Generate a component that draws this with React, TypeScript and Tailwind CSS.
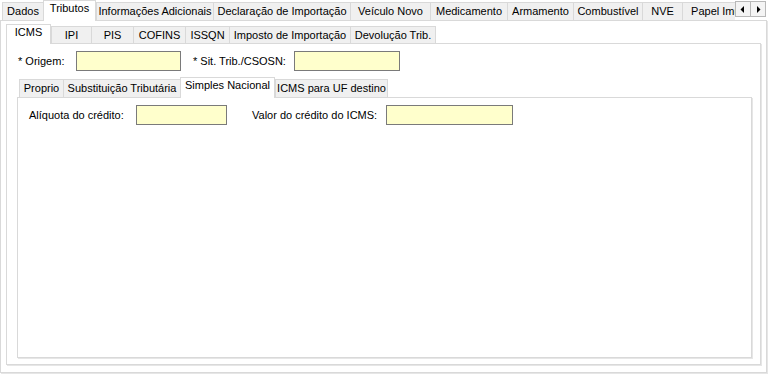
import React from "react";

type TabDef = { label: string; w: number; selected?: boolean };

function Tab({ label, w, selected, hSel, hUn }: TabDef & { hSel: string; hUn: string }) {
  if (selected) {
    return (
      <div
        style={{ width: w }}
        className={`${hSel} shrink-0 bg-white border-t border-l border-r border-[#d9d9d9] flex items-start justify-center pt-[2px] relative z-10 whitespace-nowrap`}
      >
        {label}
      </div>
    );
  }
  return (
    <div
      style={{ width: w }}
      className={`${hUn} shrink-0 bg-[#f0f0f0] border-t border-l border-r border-[#d9d9d9] -mr-px flex items-center justify-center whitespace-nowrap overflow-hidden`}
    >
      {label}
    </div>
  );
}

const outerTabs: TabDef[] = [
  { label: "Dados", w: 42 },
  { label: "Tributos", w: 53, selected: true },
  { label: "Informações Adicionais", w: 118 },
  { label: "Declaração de Importação", w: 138 },
  { label: "Veículo Novo", w: 81 },
  { label: "Medicamento", w: 78 },
  { label: "Armamento", w: 67 },
  { label: "Combustível", w: 70 },
  { label: "NVE", w: 41 },
  { label: "Papel Imune", w: 80 },
];

const icmsTabs: TabDef[] = [
  { label: "ICMS", w: 45, selected: true },
  { label: "IPI", w: 41 },
  { label: "PIS", w: 43 },
  { label: "COFINS", w: 53 },
  { label: "ISSQN", w: 45 },
  { label: "Imposto de Importação", w: 122 },
  { label: "Devolução Trib.", w: 86 },
];

const snTabs: TabDef[] = [
  { label: "Proprio", w: 45 },
  { label: "Substituição Tributária", w: 118 },
  { label: "Simples Nacional", w: 95, selected: true },
  { label: "ICMS para UF destino", w: 113 },
];

function Input({ w }: { w: number }) {
  return <div style={{ width: w }} className="h-[20px] shrink-0 bg-[#ffffcc] border border-[#7a7a7a]" />;
}

export default function App() {
  return (
    <div
      className="w-[775px] h-[378px] bg-white overflow-hidden text-[11px] leading-none text-black"
      style={{ fontFamily: "'Liberation Sans', Arial, sans-serif" }}
    >
      {/* outer tab strip */}
      <div className="flex h-[21px] -mb-px relative z-10">
        <div className="w-[735px] h-[21px] overflow-hidden flex items-end pl-[2px]">
          {outerTabs.map((t) => (
            <Tab key={t.label} {...t} hSel="h-[21px]" hUn="h-[18px] mb-px" />
          ))}
        </div>
        <div className="flex h-[17px] mt-px">
          <div className="w-[16px] h-[16px] border border-[#b8b8b8] bg-[#f4f4f4] flex items-center justify-center">
            <svg width="6" height="7" viewBox="0 0 6 7"><path d="M4 0 L4 7 L0.5 3.5 Z" fill="#000" /></svg>
          </div>
          <div className="w-[16px] h-[16px] -ml-px border border-[#b8b8b8] bg-[#f4f4f4] flex items-center justify-center">
            <svg width="6" height="7" viewBox="0 0 6 7"><path d="M2 0 L2 7 L5.5 3.5 Z" fill="#000" /></svg>
          </div>
        </div>
      </div>

      {/* outer panel */}
      <div className="w-[767px] h-[353px] border border-[#d9d9d9] shadow-[1px_1px_0_0_#e6e6e6] pl-[5px]">
        {/* ICMS tab strip */}
        <div className="flex items-end h-[23px] -mb-px relative z-10">
          {icmsTabs.map((t) => (
            <Tab key={t.label} {...t} hSel="h-[20px]" hUn="h-[17px] mb-px" />
          ))}
        </div>
        {/* ICMS panel */}
        <div className="w-[755px] h-[322px] border border-[#d9d9d9] shadow-[1px_1px_0_0_#e6e6e6] pl-[11px]">
          <div className="flex items-center mt-[7px]">
            <div className="w-[58px] pt-px">* Origem:</div>
            <Input w={105} />
            <div className="w-[101px] ml-[12px] pt-px">* Sit. Trib./CSOSN:</div>
            <Input w={106} />
          </div>
          {/* SN tab strip */}
          <div className="flex items-end h-[21px] mt-[6px] -mb-px relative z-10 -ml-px pl-[2px]">
            {snTabs.map((t) => (
              <Tab key={t.label} {...t} hSel="h-[21px]" hUn="h-[18px] mb-px" />
            ))}
          </div>
          <div className="w-[735px] h-[261px] -ml-px border border-[#d9d9d9] shadow-[1px_1px_0_0_#e6e6e6] pl-[11px]">
            <div className="flex items-center mt-[7px]">
              <div className="w-[107px] pt-px">Alíquota do crédito:</div>
              <Input w={91} />
              <div className="w-[134px] ml-[25px] pt-px">Valor do crédito do ICMS:</div>
              <Input w={127} />
            </div>
          </div>
        </div>
      </div>
    </div>
  );
}
